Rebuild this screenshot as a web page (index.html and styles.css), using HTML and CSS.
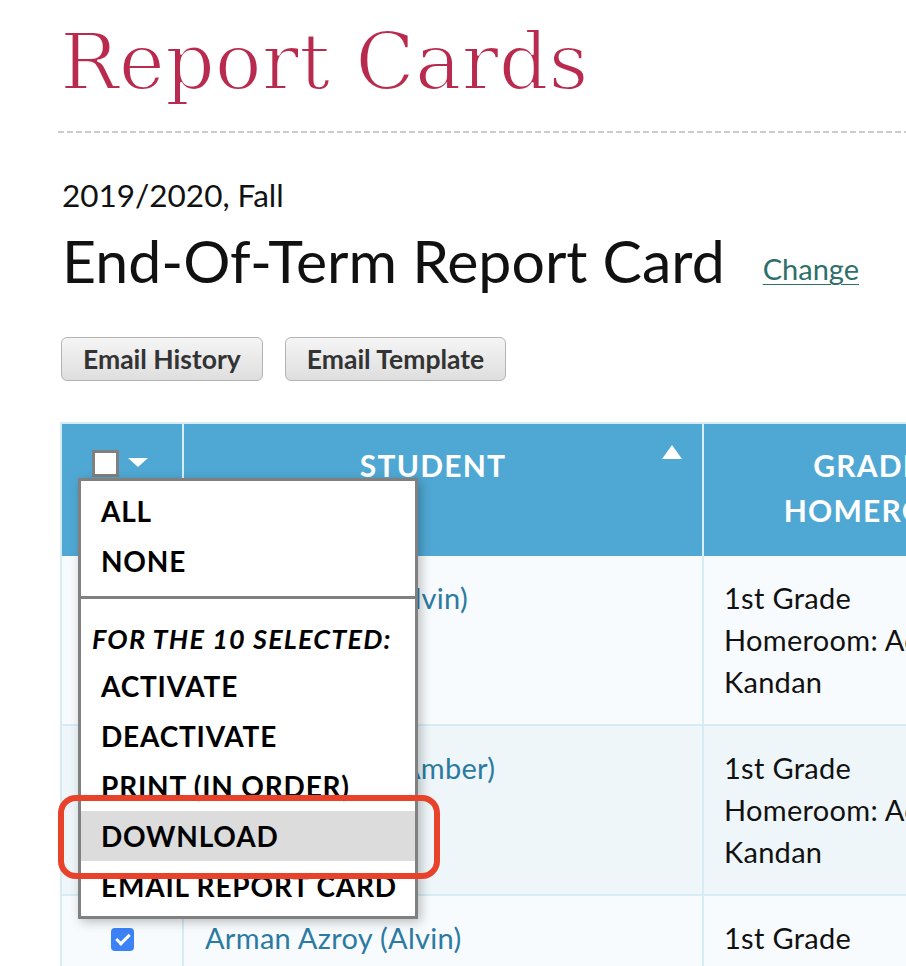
FILE: index.html
```html
<!DOCTYPE html>
<html lang="en">
<head>
<meta charset="utf-8">
<title>Report Cards</title>
<link rel="stylesheet" href="styles.css">
</head>
<body>
<div class="page">
  <h1 class="title">Report Cards</h1>
  <div class="rule"></div>
  <div class="content">
    <div class="term">2019/2020, Fall</div>
    <h2 class="heading">End-Of-Term Report Card<a class="change" href="#">Change</a></h2>
    <div class="buttons">
      <button class="btn">Email History</button>
      <button class="btn">Email Template</button>
    </div>
  </div>

  <div class="table-wrap">
    <div class="grid">
      <div class="th th-check">
        <span class="hbox"></span><span class="caret"></span>
      </div>
      <div class="th th-student">STUDENT<span class="sort"></span></div>
      <div class="th th-grade">GRADE &amp;<br>HOMEROOM</div>

      <div class="row odd">
        <div class="td td-check"><span class="cbox"></span></div>
        <div class="td td-name"><a href="#">Aaron Abbatt (Alvin)</a></div>
        <div class="td td-grade">1st Grade<br>Homeroom: Adele<br>Kandan</div>
      </div>
      <div class="row even">
        <div class="td td-check"><span class="cbox"></span></div>
        <div class="td td-name"><a href="#">Aminah Azroy (Amber)</a></div>
        <div class="td td-grade">1st Grade<br>Homeroom: Adele<br>Kandan</div>
      </div>
      <div class="row odd">
        <div class="td td-check"><span class="cbox"></span></div>
        <div class="td td-name"><a href="#">Arman Azroy (Alvin)</a></div>
        <div class="td td-grade">1st Grade<br>Homeroom: Adele<br>Kandan</div>
      </div>
    </div>

    <div class="menu">
      <div class="menu-sec first">
        <div class="mi">ALL</div>
        <div class="mi">NONE</div>
      </div>
      <div class="menu-sep"></div>
      <div class="menu-sec">
        <div class="mlabel">FOR THE 10 SELECTED:</div>
        <div class="mi">ACTIVATE</div>
        <div class="mi">DEACTIVATE</div>
        <div class="mi">PRINT (IN ORDER)</div>
        <div class="mi active">DOWNLOAD</div>
        <div class="mi">EMAIL REPORT CARD</div>
      </div>
    </div>
    <div class="callout"></div>
  </div>
</div>
</body>
</html>
```

FILE: styles.css
```css
html, body {
  margin: 0;
  padding: 0;
  background: #ffffff;
  overflow: hidden;
}
body {
  font-family: "Lato", "Liberation Sans", sans-serif;
  color: #111;
}
.page {
  width: 1100px;
  padding-left: 58px;
}
.title {
  margin: 0;
  padding-top: 23px;
  padding-left: 2px;
  font-family: "DejaVu Serif", "Liberation Serif", serif;
  font-weight: normal;
  font-size: 78px;
  line-height: 78px;
  color: #b82b4f;
  -webkit-text-stroke: 2px #ffffff;
  paint-order: normal;
}
.rule {
  margin-top: 30px;
  height: 2px;
  background: repeating-linear-gradient(90deg, #cccccc 0 6px, transparent 6px 9px);
}
.content {
  padding-left: 4px;
}
.term {
  margin-top: 44px;
  font-size: 31.5px;
  line-height: 36px;
}
.heading {
  margin: 16px 0 0;
  font-weight: normal;
  font-size: 59px;
  line-height: 64px;
}
.change {
  margin-left: 38px;
  font-size: 29px;
  color: #2e6f6b;
  vertical-align: 3px;
  text-decoration-thickness: 1px;
  text-underline-offset: 4px;
}
.buttons {
  display: flex;
  gap: 22px;
  margin-top: 36px;
  margin-left: -1px;
}
.btn {
  height: 44px;
  padding: 0 21px;
  font-family: "Lato", "Liberation Sans", sans-serif;
  font-weight: bold;
  font-size: 26.5px;
  color: #333;
  border: 1px solid #b3b3b3;
  border-radius: 6px;
  background: linear-gradient(#f5f5f5, #dedede);
}

.table-wrap {
  position: relative;
  margin-top: 41px;
  margin-left: 2px;
}
.grid {
  display: grid;
  grid-template-columns: 122px 520px 360px;
  border-top: 2px solid #d6ebf4;
  border-left: 2px solid #d6ebf4;
}
.row { display: contents; }
.th {
  box-sizing: border-box;
  height: 132px;
  background: #4fa8d3;
  color: #fff;
  font-weight: bold;
  font-size: 30px;
  line-height: 45px;
  letter-spacing: 1.2px;
  border-right: 2px solid #d9edf6;
  text-align: center;
  padding-top: 19px;
}
.th-check {
  display: flex;
  align-items: flex-start;
  padding: 26px 0 0 30px;
}
.hbox {
  box-sizing: border-box;
  width: 27px;
  height: 27px;
  background: #fff;
  border: 3px solid #808080;
}
.caret {
  margin: 8px 0 0 9px;
  width: 0;
  height: 0;
  border-left: 10px solid transparent;
  border-right: 10px solid transparent;
  border-top: 9px solid #fff;
}
.th-student {
  position: relative;
  padding-right: 20px;
}
.sort {
  position: absolute;
  right: 20px;
  top: 21px;
  width: 0;
  height: 0;
  border-left: 10px solid transparent;
  border-right: 10px solid transparent;
  border-bottom: 14px solid #fff;
}
.td {
  box-sizing: border-box;
  height: 170px;
  padding: 21px 20px;
  font-size: 29px;
  letter-spacing: 0.3px;
  line-height: 42px;
  border-right: 2px solid #d6ebf4;
  border-bottom: 2px solid #d6ebf4;
  white-space: nowrap;
}
.odd .td { background: #f8fbfd; }
.even .td { background: #eef6f9; }
.td-name a {
  color: #2b7aa2;
  text-decoration: none;
}
.td-check {
  display: flex;
  justify-content: center;
  padding-top: 32px;
}
.cbox {
  position: relative;
  width: 23px;
  height: 23px;
  border-radius: 4px;
  background: #3b82f6;
}
.cbox::after {
  content: "";
  position: absolute;
  left: 8px;
  top: 3px;
  width: 5px;
  height: 11px;
  border: solid #fff;
  border-width: 0 3px 3px 0;
  transform: rotate(45deg);
}
.td-name { padding-left: 21px; }

.menu {
  position: absolute;
  left: 18px;
  top: 56px;
  box-sizing: border-box;
  width: 340px;
  height: 441px;
  background: #fff;
  border: 3px solid #808080;
  box-shadow: 3px 3px 10px rgba(0,0,0,0.25);
  font-weight: bold;
  font-size: 28px;
  letter-spacing: 0.8px;
  color: #000;
  white-space: nowrap;
}
.menu-sec.first { padding: 5px 0 10px; }
.menu-sep {
  margin: 0 -3px;
  height: 3px;
  background: #808080;
}
.menu-sec { padding-top: 17px; }
.mi {
  height: 50px;
  line-height: 50px;
  padding-left: 20px;
}
.mi.active { background: #dcdcdc; }
.mlabel {
  height: 45px;
  line-height: 45px;
  padding-left: 11px;
  font-style: italic;
  font-size: 27px;
  letter-spacing: 1.2px;
}
.callout {
  position: absolute;
  left: -2px;
  top: 373px;
  box-sizing: border-box;
  width: 382px;
  height: 84px;
  border: 6px solid #e8422b;
  border-radius: 18px;
}
```
